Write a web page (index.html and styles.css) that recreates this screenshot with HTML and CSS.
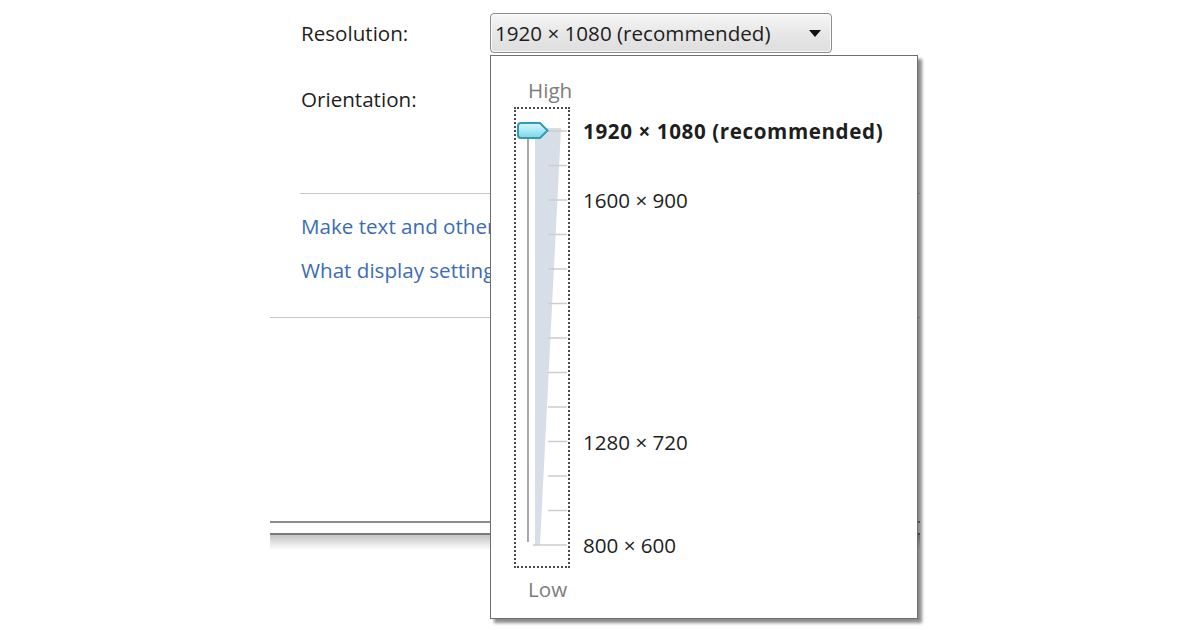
FILE: index.html
```html
<!DOCTYPE html>
<html>
<head>
<meta charset="utf-8">
<link rel="stylesheet" href="styles.css">
</head>
<body>
<div class="window">
  <div class="field-row row-res">
    <span class="label">Resolution:</span>
    <div class="combo">
      <span class="combo-text">1920 × 1080 (recommended)</span>
      <span class="arrow"></span>
    </div>
  </div>
  <div class="field-row row-orient">
    <span class="label">Orientation:</span>
  </div>
  <div class="sep sep-inset"></div>
  <div class="links">
    <a class="link">Make text and other items larger or smaller</a>
    <a class="link">What display settings should I choose?</a>
  </div>
  <div class="sep"></div>
  <div class="footer">
    <div class="fline fline-1"></div>
    <div class="fline fline-2"></div>
    <div class="fshadow"></div>
  </div>

  <div class="popup">
    <div class="slider-col">
      <div class="end-label high">High</div>
      <div class="focus-box">
        <svg class="slider" width="52" height="457" viewBox="0 0 52 457">
          <defs>
            <linearGradient id="thumbFill" x1="0" y1="0" x2="0" y2="1">
              <stop offset="0" stop-color="#d8f7fd"/>
              <stop offset="0.5" stop-color="#a9e8f5"/>
              <stop offset="1" stop-color="#7fd3e6"/>
            </linearGradient>
          </defs>
          <polygon points="19,19 45,19 24,436 19,436" fill="#d7dee7"/>
          <g stroke="#cdcdcd" stroke-width="1.5">
            <line x1="32" y1="22" x2="51" y2="22"/>
            <line x1="32" y1="56.5" x2="51" y2="56.5"/>
            <line x1="32" y1="91" x2="51" y2="91"/>
            <line x1="32" y1="125.5" x2="51" y2="125.5"/>
            <line x1="32" y1="160" x2="51" y2="160"/>
            <line x1="32" y1="194.5" x2="51" y2="194.5"/>
            <line x1="32" y1="229" x2="51" y2="229"/>
            <line x1="32" y1="263.5" x2="51" y2="263.5"/>
            <line x1="32" y1="298" x2="51" y2="298"/>
            <line x1="32" y1="332.5" x2="51" y2="332.5"/>
            <line x1="32" y1="367" x2="51" y2="367"/>
            <line x1="32" y1="401.5" x2="51" y2="401.5"/>
            <line x1="17" y1="436" x2="51" y2="436"/>
          </g>
          <line x1="12" y1="30" x2="12" y2="433" stroke="#a9a9a9" stroke-width="2"/>
          <path d="M5 14 H24 L31.5 21.5 L24 29 H5 Q2 29 2 26 V17 Q2 14 5 14 Z" fill="url(#thumbFill)" stroke="#2f9bb4" stroke-width="2"/>
        </svg>
      </div>
      <div class="end-label low">Low</div>
    </div>
    <div class="res-list">
      <div class="res res-bold r1">1920 × 1080 (recommended)</div>
      <div class="res r3">1600 × 900</div>
      <div class="res r10">1280 × 720</div>
      <div class="res r13">800 × 600</div>
    </div>
  </div>
</div>
</body>
</html>
```
FILE: styles.css
```css
html, body {
  margin: 0;
  padding: 0;
  background: #ffffff;
}

body {
  width: 1200px;
  height: 630px;
  overflow: hidden;
  font-family: "Open Sans", "Noto Sans", sans-serif;
  font-size: 20.6px;
  color: #1e1e1e;
}

.window {
  position: relative;
  margin-left: 270px;
  width: 650px;
  height: 630px;
  display: flex;
  flex-direction: column;
}

.field-row {
  display: flex;
  align-items: center;
  padding-left: 31px;
}

.label {
  width: 189px;
  line-height: 24px;
}

.row-res {
  margin-top: 13px;
  height: 40px;
}

.row-orient {
  margin-top: 34px;
  height: 24px;
}

.combo {
  box-sizing: border-box;
  width: 342px;
  height: 40px;
  border: 1px solid #8c8c8c;
  border-radius: 4px;
  background: linear-gradient(#f6f6f6, #e6e6e6 55%, #dedede);
  display: flex;
  align-items: center;
  justify-content: space-between;
  padding: 0 8px 0 4px;
  box-shadow: inset 0 0 0 1px #fbfbfb;
}

.combo-text {
  line-height: 24px;
}

.arrow {
  width: 0;
  height: 0;
  border-left: 6px solid transparent;
  border-right: 6px solid transparent;
  border-top: 7px solid #111;
  margin-right: 2px;
}

.sep {
  height: 0;
  border-top: 1px solid #c6c6c6;
  margin-top: 35px;
}

.sep-inset {
  margin-top: 82px;
  margin-left: 30px;
}

.links {
  display: flex;
  flex-direction: column;
  gap: 20px;
  padding-left: 31px;
  margin-top: 20px;
  white-space: nowrap;
}

.link {
  color: #3a6db3;
  line-height: 24px;
}

.footer {
  margin-top: 203px;
  display: flex;
  flex-direction: column;
}

.fline {
  height: 2px;
  background: #8c8c8c;
}

.fline-2 {
  margin-top: 10px;
  background: #7a7a7a;
}

.fshadow {
  height: 15px;
  background: linear-gradient(#c4c4c4, #ffffff);
}

.popup {
  position: absolute;
  left: 220px;
  top: 55px;
  box-sizing: border-box;
  width: 428px;
  height: 564px;
  background: #ffffff;
  border: 1px solid #6e6e6e;
  box-shadow: 4px 4px 3px rgba(0, 0, 0, 0.45);
  display: flex;
  padding-left: 23px;
  z-index: 2;
}

.slider-col {
  display: flex;
  flex-direction: column;
  width: 56px;
}

.end-label {
  color: #7d7d7d;
  line-height: 24px;
  padding-left: 14px;
}

.high {
  margin-top: 22px;
}

.focus-box {
  box-sizing: border-box;
  margin-top: 5px;
  width: 56px;
  height: 461px;
  border: 2px dotted #4a4a4a;
  display: flex;
}

.slider {
  display: block;
}

.low {
  margin-top: 9px;
}

.res-list {
  margin-top: 57.75px;
  margin-left: 13px;
  display: grid;
  grid-template-rows: repeat(13, 34.5px);
  align-items: center;
}

.res {
  line-height: 24px;
  white-space: nowrap;
}

.res-bold {
  font-weight: 700;
  letter-spacing: 0.6px;
}

.r1 { grid-row: 1; }
.r3 { grid-row: 3; }
.r10 { grid-row: 10; }
.r13 { grid-row: 13; }
```
